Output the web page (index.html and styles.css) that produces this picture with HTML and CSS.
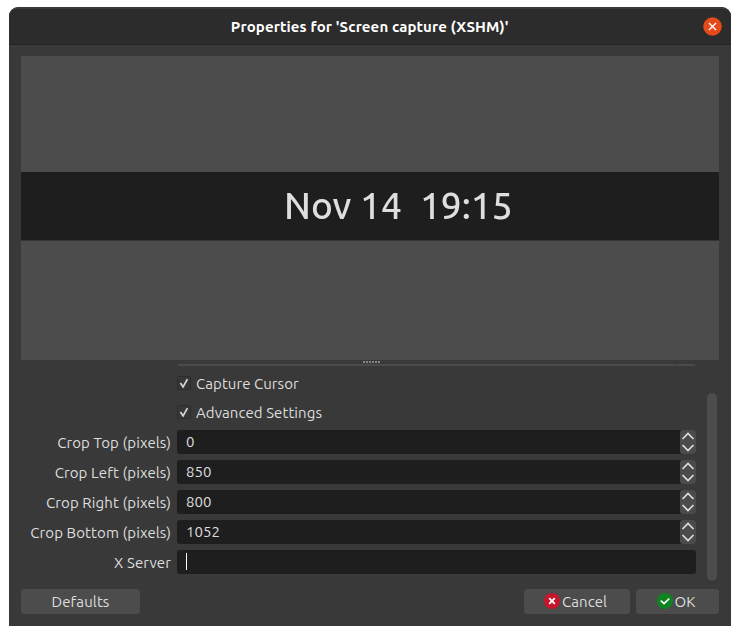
FILE: index.html
```
<!DOCTYPE html>
<html lang="en">
<head>
<meta charset="utf-8">
<title>Properties for 'Screen capture (XSHM)'</title>
<link rel="stylesheet" href="styles.css">
</head>
<body>
<div class="window">
  <header class="titlebar">
    <h1 class="title">Properties for 'Screen capture (XSHM)'</h1>
    <svg class="close" viewBox="0 0 19 19"><circle cx="9.5" cy="9.5" r="9.3" fill="#e6491a"/><path d="M6 6l7 7M13 6l-7 7" stroke="#fff" stroke-width="1.4" fill="none"/></svg>
  </header>
  <div class="preview">
    <div class="strip"><span class="date">Nov 14</span><span class="time">19:15</span></div>
  </div>
  <div class="splitter"><i></i><i></i><i></i><i></i><i></i><i></i></div>
  <div class="scroll-area">
    <div class="form">
      <div class="clipped"><span class="clipped-main"></span><span class="clipped-end"></span></div>
      <div class="check"><svg class="box" viewBox="0 0 14 14"><rect x=".5" y=".5" width="13" height="13" rx="1" fill="#363636" stroke="#2c2c2c"/><path d="M3.4 7L6.1 10.8L10.4 3.2" stroke="#d6d6d6" stroke-width="1.7" fill="none"/></svg><span>Capture Cursor</span></div>
      <div class="check"><svg class="box" viewBox="0 0 14 14"><rect x=".5" y=".5" width="13" height="13" rx="1" fill="#363636" stroke="#2c2c2c"/><path d="M3.4 7L6.1 10.8L10.4 3.2" stroke="#d6d6d6" stroke-width="1.7" fill="none"/></svg><span>Advanced Settings</span></div>
      <div class="row"><span class="label">Crop Top (pixels)</span><div class="field"><span class="value">0</span><svg class="spin" viewBox="0 0 16 24"><path d="M2.5 9L8 3.5L13.5 9M2.5 15L8 20.5L13.5 15"/></svg></div></div>
      <div class="row"><span class="label">Crop Left (pixels)</span><div class="field"><span class="value">850</span><svg class="spin" viewBox="0 0 16 24"><path d="M2.5 9L8 3.5L13.5 9M2.5 15L8 20.5L13.5 15"/></svg></div></div>
      <div class="row"><span class="label">Crop Right (pixels)</span><div class="field"><span class="value">800</span><svg class="spin" viewBox="0 0 16 24"><path d="M2.5 9L8 3.5L13.5 9M2.5 15L8 20.5L13.5 15"/></svg></div></div>
      <div class="row"><span class="label">Crop Bottom (pixels)</span><div class="field"><span class="value">1052</span><svg class="spin" viewBox="0 0 16 24"><path d="M2.5 9L8 3.5L13.5 9M2.5 15L8 20.5L13.5 15"/></svg></div></div>
      <div class="row"><span class="label">X Server</span><div class="field"><span class="caret"></span></div></div>
    </div>
    <div class="scrollbar"></div>
  </div>
  <footer class="actions">
    <div class="button defaults">Defaults</div>
    <div class="button cancel"><svg class="icon" viewBox="0 0 16 16"><circle cx="8" cy="8" r="8" fill="#c7162b"/><path d="M5.2 5.2l5.6 5.6M10.8 5.2l-5.6 5.6" stroke="#fff" stroke-width="1.8" fill="none"/></svg><span>Cancel</span></div>
    <div class="button ok"><svg class="icon" viewBox="0 0 16 16"><circle cx="8" cy="8" r="8" fill="#0e8420"/><path d="M3.8 7.7L7 10.7L12.3 5.6" stroke="#fff" stroke-width="1.6" fill="none"/></svg><span>OK</span></div>
  </footer>
</div>
</body>
</html>
```
FILE: styles.css
```
* { box-sizing: border-box; }
body { margin: 0; background: #fff; color: #dedede; font: 15px/20px Ubuntu, "Noto Sans", sans-serif; }
svg { display: block; flex: none; }
.window { width: 722px; height: 619px; margin: 7px 0 0 9px; background: #393939; border-radius: 9px 9px 0 0; overflow: hidden; }
.titlebar { display: grid; grid-template-columns: 1fr auto 1fr; align-items: center; height: 38px; padding: 0 9.5px 0 0; background: #2c2c2c; border-top: 2px solid #393939; border-bottom: 1px solid #242424; border-radius: 9px 9px 0 0; }
.title { grid-column: 2; margin: 1px 0 0 9px; color: #fff; font-size: 15px; line-height: 20px; font-weight: 700; letter-spacing: .12px; white-space: nowrap; }
.close { width: 19px; height: 19px; justify-self: end; margin-top: -1px; }
.preview { display: flex; align-items: center; height: 304px; margin: 11px 12px 0; background: #4c4c4c; }
.strip { display: flex; width: 100%; height: 69px; margin-top: -3px; padding: 0 0 0 263px; background: #1e1e1e; border-bottom: 1px solid #343434; color: #dedede; font-size: 37px; font-weight: 500; line-height: 68px; white-space: pre; }
.date, .time { filter: blur(.5px); }
.date { width: 136px; }
.splitter { display: flex; justify-content: center; gap: 1px; height: 4px; padding: 1px 0 0 3px; }
.splitter i { width: 2px; height: 2px; background: #858585; }
.scroll-area { display: flex; height: 217px; margin: 0 12px; }
.form { width: 675px; }
.clipped { display: flex; gap: 1px; height: 2px; margin: 0 1px 8px 157px; }
.clipped-main { width: 497px; background: #4b4b4b; }
.clipped-end { width: 19px; background: #4b4b4b; }
.check { display: flex; gap: 5px; align-items: center; height: 20px; margin: 0 0 9px 156px; letter-spacing: .07px; }
.box { width: 14px; height: 14px; margin-top: -2px; }
.row { display: flex; height: 24px; margin-bottom: 6px; }
.check + .row { margin-top: -2px; }
.label { width: 150px; margin-right: 6px; padding-top: 3px; text-align: right; letter-spacing: .1px; white-space: nowrap; }
.field { display: flex; align-items: center; width: 519px; height: 24px; padding-left: 9px; background: #1e1e1e; border-radius: 3px; }
.spin { width: 16px; height: 24px; margin-left: auto; background: #4b4b4b; border-radius: 3px; fill: none; stroke: #dedede; stroke-width: 1.7; }
.caret { width: 1px; height: 17px; margin-top: -1px; background: #fff; }
.scrollbar { width: 10px; height: 188px; margin: 29px 0 0 11px; border-radius: 5px; background: #4c4c4c; }
.actions { display: flex; gap: 6px; margin: 8px 12px 0; }
.button { display: flex; align-items: center; justify-content: center; height: 25px; gap: 2px; border-radius: 3px; background: #4c4c4c; letter-spacing: .1px; }
.defaults { width: 119px; margin-right: auto; }
.cancel { width: 106px; padding-right: 3px; }
.ok { width: 83px; padding-right: 3px; }
.icon { width: 16px; height: 16px; margin-top: -1px; }
```
